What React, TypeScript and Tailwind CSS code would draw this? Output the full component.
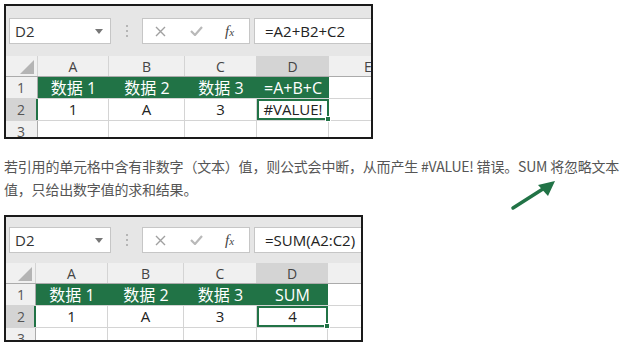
import React from 'react'

const cellFont = { fontFamily: "'Open Sans', 'Noto Sans CJK SC', sans-serif" }

type SheetProps = {
    formula: string
    toolbarH: number
    cols: number[]
    rowHeadW: number
    headers: string[]
    values: string[]
    showE: boolean
    width: number
    height: number
    nameLeft: number
}

const Toolbar = ({ formula, h }: { formula: string; h: number }) => (
    <div className="flex items-center bg-[#e6e6e6] pl-[3px]" style={{ height: h }}>
        <div className="flex h-[26px] w-[102px] items-center justify-between border border-[#c6c6c6] bg-white pl-[5px] pr-[7px]">
            <span className="text-[15px] text-[#333]">D2</span>
            <svg width="8" height="5" viewBox="0 0 8 5">
                <path d="M0 0 L8 0 L4 5 Z" fill="#777" />
            </svg>
        </div>
        <div className="flex w-[31px] flex-col items-center gap-[3px]">
            <span className="h-[2px] w-[2px] bg-[#b5b5b5]" />
            <span className="h-[2px] w-[2px] bg-[#b5b5b5]" />
            <span className="h-[2px] w-[2px] bg-[#b5b5b5]" />
        </div>
        <div className="flex h-[26px] w-[108px] items-center border border-[#c6c6c6] bg-white pl-[12px]">
            <svg width="11" height="11" viewBox="0 0 11 11">
                <path d="M1 1 L10 10 M10 1 L1 10" stroke="#a0a0a0" strokeWidth="1.4" />
            </svg>
            <svg className="ml-[24px]" width="13" height="10" viewBox="0 0 13 10">
                <path d="M1 5 L5 9 L12 1" stroke="#b9b9b9" strokeWidth="2.2" fill="none" />
            </svg>
            <span className="ml-[22px] font-['Liberation_Serif'] text-[15px] italic text-[#444]">
                f<span className="text-[11px]">x</span>
            </span>
        </div>
        <div className="ml-[4px] flex h-[26px] flex-1 items-center border border-[#c6c6c6] border-r-0 bg-white pl-[10px]">
            <span className="text-[15px] text-[#222]">{formula}</span>
        </div>
    </div>
)

const Sheet = ({ formula, toolbarH, cols, rowHeadW, headers, values, showE, width, height }: SheetProps) => {
    const letters = ['A', 'B', 'C', 'D']
    return (
        <div
            className="overflow-hidden border-2 border-[#1a1a1a] bg-white"
            style={{ ...cellFont, width, height }}
        >
            <Toolbar formula={formula} h={toolbarH} />
            {/* column headers */}
            <div className="flex h-[21px] border-b border-[#ababab] bg-[#f0f0f0] text-[14px] text-[#444]">
                <div className="flex shrink-0 items-end justify-end border-r border-[#d4d4d4] pb-[2px] pr-[3px]" style={{ width: rowHeadW }}>
                    <svg width="14" height="14" viewBox="0 0 14 14">
                        <path d="M14 0 L14 14 L0 14 Z" fill="#b4b4b4" />
                    </svg>
                </div>
                {letters.map((l, i) => (
                    <div
                        key={l}
                        className={`flex shrink-0 items-center justify-center border-r border-[#d4d4d4] ${i === 3 ? 'bg-[#d4d4d4]' : ''}`}
                        style={{ width: cols[i] }}
                    >
                        {l}
                    </div>
                ))}
                <div className="flex flex-1 items-center pl-[35px]">{showE ? 'E' : ''}</div>
            </div>
            {/* row 1 */}
            <div className="flex h-[22px] border-b border-[#d4d4d4]">
                <div className="shrink-0 border-r border-[#ababab] bg-[#f0f0f0] pl-[11px] text-[14px] leading-[22px] text-[#555]" style={{ width: rowHeadW }}>
                    1
                </div>
                {headers.map((h, i) => (
                    <div
                        key={i}
                        className="flex shrink-0 items-center justify-center bg-[#217346] text-[16px] text-white"
                        style={{ width: cols[i] }}
                    >
                        {h}
                    </div>
                ))}
                <div className="flex-1" />
            </div>
            {/* row 2 */}
            <div className="flex h-[22px] border-b border-[#d4d4d4]">
                <div className="shrink-0 border-r-2 border-[#217346] bg-[#d4d4d4] pl-[11px] text-[14px] leading-[22px] text-[#555]" style={{ width: rowHeadW }}>
                    2
                </div>
                {values.map((v, i) => (
                    <div
                        key={i}
                        className={`relative flex shrink-0 items-center justify-center text-[15px] text-[#222] ${i === 3 ? 'border-2 border-[#217346]' : 'border-r border-[#d4d4d4]'}`}
                        style={{ width: cols[i] }}
                    >
                        {v}
                        {i === 3 && (
                            <span className="absolute -bottom-[4px] -right-[4px] h-[6px] w-[6px] border border-white bg-[#217346]" />
                        )}
                    </div>
                ))}
                <div className="flex-1" />
            </div>
            {/* row 3 */}
            <div className="flex h-[22px]">
                <div className="shrink-0 border-r border-[#ababab] bg-[#f0f0f0] pl-[11px] text-[14px] leading-[22px] text-[#555]" style={{ width: rowHeadW }}>
                    3
                </div>
                {cols.map((w, i) => (
                    <div key={i} className="shrink-0 border-r border-[#d4d4d4]" style={{ width: w }} />
                ))}
            </div>
        </div>
    )
}

export default function App() {
    return (
        <div className="relative h-[346px] w-[630px] bg-white pl-[4px] pt-[4px]">
            <Sheet
                formula="=A2+B2+C2"
                toolbarH={50}
                rowHeadW={32}
                cols={[71, 76, 72, 72]}
                headers={['数据 1', '数据 2', '数据 3', '=A+B+C']}
                values={['1', 'A', '3', '#VALUE!']}
                showE
                width={369}
                height={135}
                nameLeft={3}
            />
            <p className="mt-[16px] w-[622px] font-['Noto_Sans_CJK_SC',sans-serif] text-[14px] leading-[23px] tracking-[-0.2px] text-[#555]">
                若引用的单元格中含有非数字（文本）值，则公式会中断，从而产生 #VALUE! 错误。SUM 将忽略文本值，只给出数字值的求和结果。
            </p>
            <svg className="absolute left-[510px] top-[178px]" width="50" height="34" viewBox="0 0 50 34">
                <path d="M3 30 L36 9" stroke="#217346" strokeWidth="3.5" strokeLinecap="round" />
                <path d="M45 3 L28 7 L38 18 Z" fill="#217346" />
            </svg>
            <div className="mt-[14px]">
                <Sheet
                    formula="=SUM(A2:C2)"
                    toolbarH={46}
                    rowHeadW={30}
                    cols={[72, 76, 73, 71]}
                    headers={['数据 1', '数据 2', '数据 3', 'SUM']}
                    values={['1', 'A', '3', '4']}
                    showE={false}
                    width={359}
                    height={127}
                    nameLeft={2}
                />
            </div>
        </div>
    )
}
